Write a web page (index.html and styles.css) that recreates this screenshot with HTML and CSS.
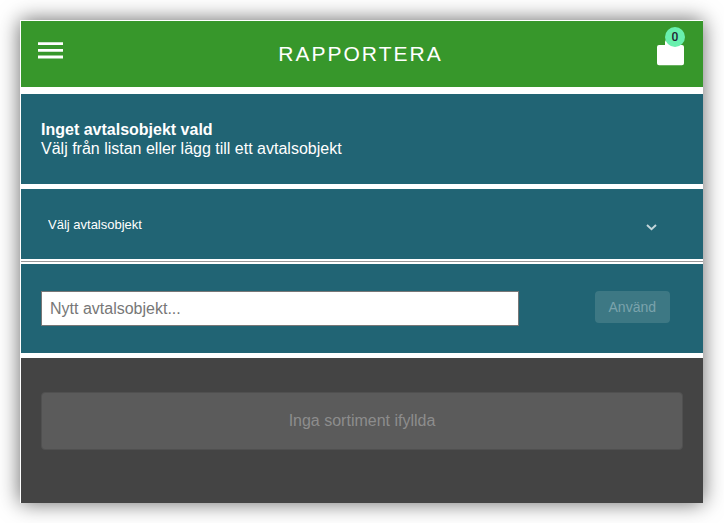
FILE: index.html
```
<!DOCTYPE html>
<html lang="sv">
<head>
<meta charset="UTF-8">
<title>Rapportera</title>
<meta name="viewport" content="width=device-width,initial-scale=1">
<link rel="stylesheet" href="styles.css">
</head>
<body>
<div class="app">
  <header class="topbar">
    <button class="icon-btn menu" type="button" aria-label="Meny">
      <svg width="26" height="18" viewBox="0 0 26 18"><path d="M0 .2h25v2.800H0zM0 6.900h25v2.800H0zM0 13.600h25v2.800H0z" fill="#fff"/></svg>
    </button>
    <h1>RAPPORTERA</h1>
    <button class="icon-btn bag" type="button" aria-label="Korg">
      <svg width="28" height="28" viewBox="0 0 28 28"><path d="M2 7H8V4a2 2 0 0 1 2-2h7a2 2 0 0 1 2 2v3h6a2 2 0 0 1 2 2v16.200a2 2 0 0 1-2 2H2a2 2 0 0 1-2-2V9a2 2 0 0 1 2-2z" fill="#fff"/></svg>
      <span class="badge">0</span>
    </button>
  </header>

  <section class="panel info">
    <strong>Inget avtalsobjekt vald</strong>
    <p>Välj från listan eller lägg till ett avtalsobjekt</p>
  </section>

  <section class="panel choose">
    <select id="object" aria-label="Välj avtalsobjekt">
      <option>Välj avtalsobjekt</option>
    </select>
    <svg class="chevron" width="11" height="7" viewBox="0 0 11 7"><path d="M1 1l4.500 4.300L10 1" fill="none" stroke="#c4d6db" stroke-width="1.900"/></svg>
  </section>

  <hr>

  <!-- new object -->
  <form class="panel add">
    <input id="newObject" type="text" placeholder="Nytt avtalsobjekt..." aria-label="Nytt avtalsobjekt">
    <button class="use" type="submit" disabled>Använd</button>
  </form>

  <main class="list">
    <button class="empty" type="button" disabled>Inga sortiment ifyllda</button>
  </main>
</div>
</body>
</html>
```
FILE: styles.css
```
*{box-sizing:border-box}
body{margin:0;padding:20px 21px 20px 20px;background:#fff;color:#fff;font:16px/19px "Liberation Sans",Arial,sans-serif}
.app{border:solid #fff;border-width:1px 0 0 1px;box-shadow:0 0 20px rgba(0,0,0,.6);background:#fff}
button,input,select{font-family:inherit}

/* top bar */
.topbar{display:flex;align-items:center;justify-content:space-between;height:66px;padding:0 18px 0 17px;
        margin-bottom:7px;background:#37972b}
h1{margin:0;font-size:21px;line-height:26px;font-weight:400;letter-spacing:2px}
.icon-btn{display:block;padding:0;border:none;background:none;cursor:pointer}
.icon-btn svg{display:block}
.menu{margin-bottom:6px}
.bag{position:relative;margin-top:-4px}
.badge{position:absolute;top:-11px;right:0;width:20px;height:20px;border-radius:50%;background:#69f0ae;
       color:#223;font:500 12px/20px Roboto,sans-serif;text-align:center}

/* teal panels */
.panel{background:#216474}
.info{padding:26px 20px;margin-bottom:5px}
.info strong{display:block}
.info p{margin:0}
.choose{display:flex;align-items:center;height:70px;padding:0 46px 0 27px}
.choose select{flex:1;height:40px;padding:0;border:none;background:none;color:#fff;font-size:13px;
               appearance:none;cursor:pointer}
.chevron{margin-top:6px;pointer-events:none}
hr{height:1px;margin:2px 0;border:none;background:#999}
.add{display:flex;align-items:flex-start;justify-content:space-between;padding:27px 33px 27px 20px;margin-bottom:5px}
.add input{width:76%;height:35px;padding:0 8px;border:1px solid #777;background:#fff;color:#222;font-size:16px}
.add input::placeholder{color:#777}
.use{height:32px;padding:0 14px;border:none;border-radius:4px;background:#3d7884;color:#7ba3ac;font-size:14px}

/* assortment list */
.list{padding:34px 20px 53px;background:#444}
.empty{display:block;width:100%;height:58px;border:1px solid #505050;border-radius:4px;background:#5b5b5b;
       color:#8d8d8d;font-size:16px}
```
